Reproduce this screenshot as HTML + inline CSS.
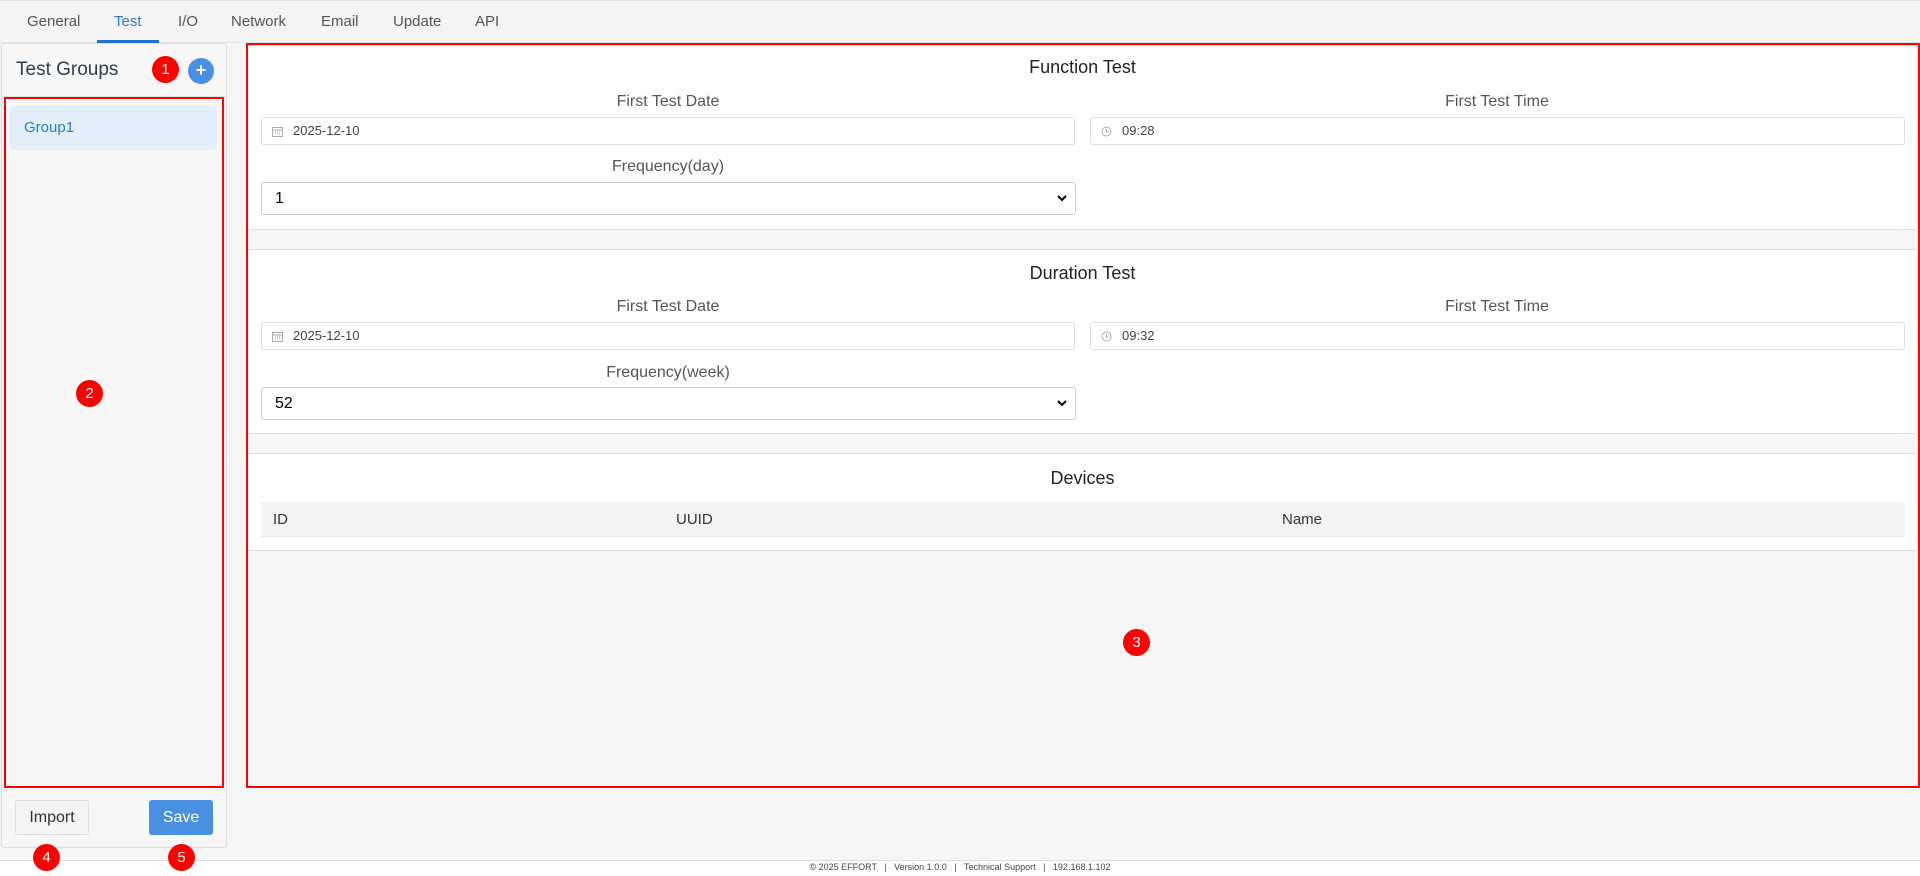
<!DOCTYPE html>
<html><head><meta charset="utf-8"><style>
*{box-sizing:border-box;margin:0;padding:0}
body{width:1920px;height:876px;position:relative;overflow:hidden;font-family:"Liberation Sans",Arial,sans-serif;background:#f5f6f8;color:#333}
.a{position:absolute}
.tabs{left:0;top:0;width:1920px;height:43px;background:#f4f4f4;border-top:1px solid #e2e2e2;border-bottom:1px solid #e4e4e4}
.tab{position:absolute;top:12px;font-size:15px;color:#555}
.badge{position:absolute;width:27px;height:27px;border-radius:50%;background:#f00;color:#fff;font-size:15px;text-align:center;line-height:27px;z-index:5}
.left{left:1px;top:43px;width:226px;height:805px;background:#f7f7f7;border:1px solid #ddd;border-radius:3px}
.red{border:2px solid #f00}
.card{left:248px;width:1669px;background:#fff;border-top:1px solid #e0e0e0;border-bottom:1px solid #e0e0e0}
.title{position:absolute;width:100%;text-align:center;font-size:18px;color:#222}
.lbl{position:absolute;width:814px;text-align:center;font-size:16px;color:#555}
.inp{position:absolute;height:28px;border:1px solid #dcdfe6;border-radius:3px;background:#fff;font-size:13px;color:#444;padding-left:31px;line-height:26px}
.sel{position:absolute;height:33px;border:1px solid #ccc;border-radius:3px;background:#fff;font-size:16px;color:#000;padding-left:13px;line-height:31px}
.sel svg{position:absolute;right:8px;top:12px}
</style></head><body>
<div class="a tabs">
<span class="tab" style="left:27px">General</span>
<span class="tab" style="left:114px;color:#2a7ad5">Test</span>
<div class="a" style="left:97px;top:39px;width:62px;height:3px;background:#1f72d0"></div>
<span class="tab" style="left:178px">I/O</span>
<span class="tab" style="left:231px">Network</span>
<span class="tab" style="left:321px">Email</span>
<span class="tab" style="left:393px">Update</span>
<span class="tab" style="left:475px">API</span>
</div>

<div class="a" style="left:0;top:860px;width:1920px;height:16px;background:#fff;border-top:1px solid #ddd"></div>
<div class="a" style="left:0;top:862px;width:1920px;text-align:center;font-size:9px;color:#444">© 2025 EFFORT &nbsp;&nbsp;| &nbsp;&nbsp;Version 1.0.0 &nbsp;&nbsp;| &nbsp;&nbsp;Technical Support &nbsp;&nbsp;| &nbsp;&nbsp;192.168.1.102</div>

<div class="a left">
<div class="a" style="left:14px;top:15px;font-size:19px;color:#2c3e50">Test Groups</div>
<div class="badge" style="left:150px;top:12px">1</div>
<div class="a" style="left:186px;top:14px;width:26px;height:26px;border-radius:50%;background:#4a90e2;color:#fff;text-align:center;line-height:25px;font-size:18px;font-weight:bold">+</div>
<div class="a" style="left:0;top:52px;width:224px;height:1px;background:#e0e0e0"></div>
</div>
<div class="a red" style="left:4px;top:97px;width:220px;height:691px"></div>
<div class="a" style="left:10px;top:106px;width:207px;height:44px;background:#e3f0fb;border-radius:3px;color:#2a7ad5;font-size:15px;line-height:44px;padding-left:14px">Group1</div>
<div class="badge" style="left:76px;top:380px">2</div>
<div class="a" style="left:15px;top:800px;width:74px;height:35px;border:1px solid #ddd;border-radius:3px;background:#f4f4f4;font-size:16px;text-align:center;line-height:33px;color:#333">Import</div>
<div class="a" style="left:149px;top:800px;width:64px;height:35px;border-radius:3px;background:#4a90e2;font-size:16px;text-align:center;line-height:35px;color:#fff">Save</div>
<div class="badge" style="left:33px;top:844px">4</div>
<div class="badge" style="left:168px;top:844px">5</div>

<div class="a card" style="top:45px;height:185px">
<div class="title" style="top:11px">Function Test</div>
<div class="lbl" style="left:13px;top:47px">First Test Date</div>
<div class="lbl" style="left:842px;top:47px">First Test Time</div>
<div class="inp" style="left:13px;top:71px;width:814px">2025-12-10<svg class="a" style="left:10px;top:8px" width="11" height="11" viewBox="0 0 11 11"><rect x="0.5" y="1.5" width="10" height="9" fill="none" stroke="#aaa"/><path d="M1 4h9M3 6h1M5 6h1M7 6h1M3 8h1M5 8h1M7 8h1" stroke="#aaa"/></svg></div>
<div class="inp" style="left:842px;top:71px;width:815px">09:28<svg class="a" style="left:10px;top:8px" width="11" height="11" viewBox="0 0 11 11"><circle cx="5.5" cy="5.5" r="4.5" fill="none" stroke="#aaa"/><path d="M5.5 3v3h2" fill="none" stroke="#aaa"/></svg></div>
<div class="lbl" style="left:13px;top:112px">Frequency(day)</div>
<div class="sel" style="left:13px;top:136px;width:815px">1<svg width="10" height="7" viewBox="0 0 10 7"><path d="M1 1l4 4 4-4" fill="none" stroke="#000" stroke-width="2"/></svg></div>
</div>

<div class="a card" style="top:249px;height:185px">
<div class="title" style="top:13px">Duration Test</div>
<div class="lbl" style="left:13px;top:48px">First Test Date</div>
<div class="lbl" style="left:842px;top:48px">First Test Time</div>
<div class="inp" style="left:13px;top:72px;width:814px">2025-12-10<svg class="a" style="left:10px;top:8px" width="11" height="11" viewBox="0 0 11 11"><rect x="0.5" y="1.5" width="10" height="9" fill="none" stroke="#aaa"/><path d="M1 4h9M3 6h1M5 6h1M7 6h1M3 8h1M5 8h1M7 8h1" stroke="#aaa"/></svg></div>
<div class="inp" style="left:842px;top:72px;width:815px">09:32<svg class="a" style="left:10px;top:8px" width="11" height="11" viewBox="0 0 11 11"><circle cx="5.5" cy="5.5" r="4.5" fill="none" stroke="#aaa"/><path d="M5.5 3v3h2" fill="none" stroke="#aaa"/></svg></div>
<div class="lbl" style="left:13px;top:114px">Frequency(week)</div>
<div class="sel" style="left:13px;top:137px;width:815px">52<svg width="10" height="7" viewBox="0 0 10 7"><path d="M1 1l4 4 4-4" fill="none" stroke="#000" stroke-width="2"/></svg></div>
</div>

<div class="a card" style="top:453px;height:98px">
<div class="title" style="top:14px">Devices</div>
<div class="a" style="left:13px;top:48px;width:1644px;height:35px;background:#f3f3f3;border-bottom:1px solid #e8e8e8;font-size:15px;color:#333">
<span class="a" style="left:12px;top:9px">ID</span>
<span class="a" style="left:415px;top:9px">UUID</span>
<span class="a" style="left:1021px;top:9px">Name</span>
</div>
</div>
<div class="a red" style="left:246px;top:43px;width:1674px;height:745px"></div>
<div class="badge" style="left:1123px;top:629px">3</div>
</body></html>
